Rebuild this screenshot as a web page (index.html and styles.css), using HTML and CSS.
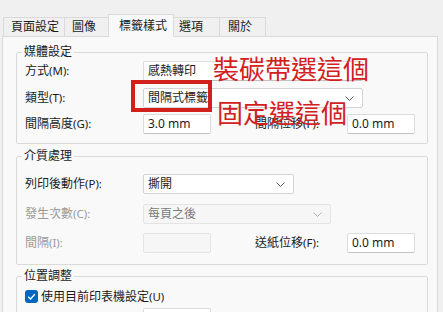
FILE: index.html
```html
<!DOCTYPE html>
<html lang="zh-Hant">
<head>
  <meta charset="UTF-8">
  <title>標籤樣式</title>
  <link rel="stylesheet" href="styles.css">
</head>
<body>
  <div class="tabs">
    <div class="tab tab-page">頁面設定</div>
    <div class="tab tab-image">圖像</div>
    <div class="tab tab-active">標籤樣式</div>
    <div class="tab tab-opts">選項</div>
    <div class="tab tab-about">關於</div>
  </div>

  <div class="panel">
    <fieldset class="group group-media">
      <legend>媒體設定</legend>
      <div class="row">
        <label class="label">方式<span class="key">(M):</span></label>
        <div class="field field-wide">感熱轉印</div>
      </div>
      <div class="row">
        <label class="label">類型<span class="key">(T):</span></label>
        <div class="field field-wide select">間隔式標籤
          <svg class="chevron" viewBox="0 0 9 5"><polyline points="0.5,0.5 4.5,4.5 8.5,0.5" fill="none" stroke="#606060" stroke-width="1"/></svg>
        </div>
      </div>
      <div class="row">
        <label class="label">間隔高度<span class="key">(G):</span></label>
        <div class="field field-num">3.0 mm</div>
        <label class="label label-right">間隔位移<span class="key">(F):</span></label>
        <div class="field field-num">0.0 mm</div>
      </div>
    </fieldset>

    <fieldset class="group group-handling">
      <legend>介質處理</legend>
      <div class="row">
        <label class="label">列印後動作<span class="key">(P):</span></label>
        <div class="field field-mid select">撕開
          <svg class="chevron" viewBox="0 0 9 5"><polyline points="0.5,0.5 4.5,4.5 8.5,0.5" fill="none" stroke="#606060" stroke-width="1"/></svg>
        </div>
      </div>
      <div class="row">
        <label class="label disabled">發生次數<span class="key">(C):</span></label>
        <div class="field field-long select is-disabled">每頁之後
          <svg class="chevron" viewBox="0 0 9 5"><polyline points="0.5,0.5 4.5,4.5 8.5,0.5" fill="none" stroke="#b0b0b0" stroke-width="1"/></svg>
        </div>
      </div>
      <div class="row">
        <label class="label disabled">間隔<span class="key">(I):</span></label>
        <div class="field field-num is-disabled"></div>
        <label class="label label-right">送紙位移<span class="key">(F):</span></label>
        <div class="field field-num">0.0 mm</div>
      </div>
    </fieldset>

    <fieldset class="group group-position">
      <legend>位置調整</legend>
      <div class="row row-check">
        <span class="checkbox">
          <svg viewBox="0 0 13 13"><polyline points="3.2,6.8 5.5,9 9.8,4.2" fill="none" stroke="#fff" stroke-width="1.3"/></svg>
        </span>
        <span class="check-text">使用目前印表機設定<span class="key">(U)</span></span>
      </div>
      <div class="row">
        <label class="label"></label>
        <div class="field field-num"></div>
      </div>
    </fieldset>

    <div class="note note-ribbon">裝碳帶選這個</div>
    <div class="note note-fixed">固定選這個</div>
    <div class="mark-box"></div>
  </div>
</body>
</html>
```

FILE: styles.css
```css
:root {
  --window: #f0f0f0;
  --panel: #f9f9f9;
  --line: #dadada;
  --text: #1b1b1b;
  --muted: #9a9a9a;
  --red: #d2201f;
  --blue: #0067c0;
}

body {
  margin: 0;
  height: 312px;
  overflow: hidden;
  background-color: var(--window);
  color: var(--text);
  font-family: "Noto Sans", "Noto Sans CJK TC", sans-serif;
  font-size: 12px;
}

/* tab strip */
.tabs {
  display: flex;
  align-items: flex-end;
  height: 36px;
  padding-left: 3px;
}

.tab {
  box-sizing: border-box;
  height: 19px;
  line-height: 18px;
  padding-left: 7px;
  border: 1px solid var(--line);
  border-bottom: none;
  margin-right: -1px;
  background-color: var(--window);
}

.tab-page { width: 62px; }
.tab-image { width: 45px; }
.tab-opts { width: 47px; padding-left: 5px; }
.tab-about { width: 47px; padding-left: 8px; }

.tab-active {
  position: relative;
  z-index: 1;
  width: 66px;
  height: 23px;
  line-height: 22px;
  padding-left: 10px;
  margin-bottom: -1px;
  background-color: var(--panel);
}

/* page body */
.panel {
  position: relative;
  box-sizing: border-box;
  height: 276px;
  overflow: hidden;
  margin: 0 5px 0 2px;
  padding: 7px 9px 0 13px;
  border: 1px solid var(--line);
  border-bottom: none;
  background-color: var(--panel);
}

.group {
  margin: 0;
  padding: 1px 9px 9px 8px;
  border: 1px solid var(--line);
  border-radius: 2px;
}

.group legend {
  margin-left: -3px;
  padding: 0 2px;
  line-height: 16px;
}

.group-media .row + .row { margin-top: 6.5px; }

.group-handling {
  margin-top: 4px;
  padding-top: 10px;
  padding-bottom: 11px;
}

.group-handling .row + .row { margin-top: 9.5px; }

.group-position {
  margin-top: 3px;
  padding-top: 2px;
}

.group-position .row + .row { margin-top: 2px; }

.row {
  display: flex;
  align-items: center;
  height: 20px;
}

.label {
  width: 118px;
  flex-shrink: 0;
  line-height: 20px;
}

.label-right {
  width: 92px;
  margin-left: 44px;
}

.key {
  font-size: 11.5px;
}

.disabled {
  color: var(--muted);
}

.field {
  position: relative;
  box-sizing: border-box;
  height: 20px;
  line-height: 18px;
  padding-left: 4px;
  border: 1px solid #dcdcdc;
  border-bottom-color: #c2c2c2;
  border-radius: 2px;
  background-color: #fff;
  flex-shrink: 0;
}

.field-wide { width: 220px; }
.field-mid { width: 151px; }
.field-long { width: 188px; }
.field-num { width: 68px; }

.select {
  border-color: #d4d4d4;
}

.is-disabled {
  background-color: #f6f6f6;
  border-color: #e4e4e4;
  color: #7a7a7a;
}

.chevron {
  position: absolute;
  right: 8px;
  top: 7px;
  width: 9px;
  height: 5px;
}

.row-check {
  gap: 3px;
}

.checkbox {
  display: flex;
  width: 13px;
  height: 13px;
  border-radius: 3px;
  background-color: var(--blue);
}

.checkbox svg {
  width: 13px;
  height: 13px;
}

/* red annotations drawn over the dialog */
.note {
  position: absolute;
  color: var(--red);
  font-family: "Noto Sans CJK TC", sans-serif;
  font-size: 26px;
  line-height: 26px;
  white-space: nowrap;
}

.note-ribbon {
  left: 210px;
  top: 18px;
}

.note-fixed {
  left: 214px;
  top: 62px;
}

.mark-box {
  position: absolute;
  left: 128px;
  top: 43px;
  width: 73px;
  height: 24px;
  border: 4px solid var(--red);
}
```
